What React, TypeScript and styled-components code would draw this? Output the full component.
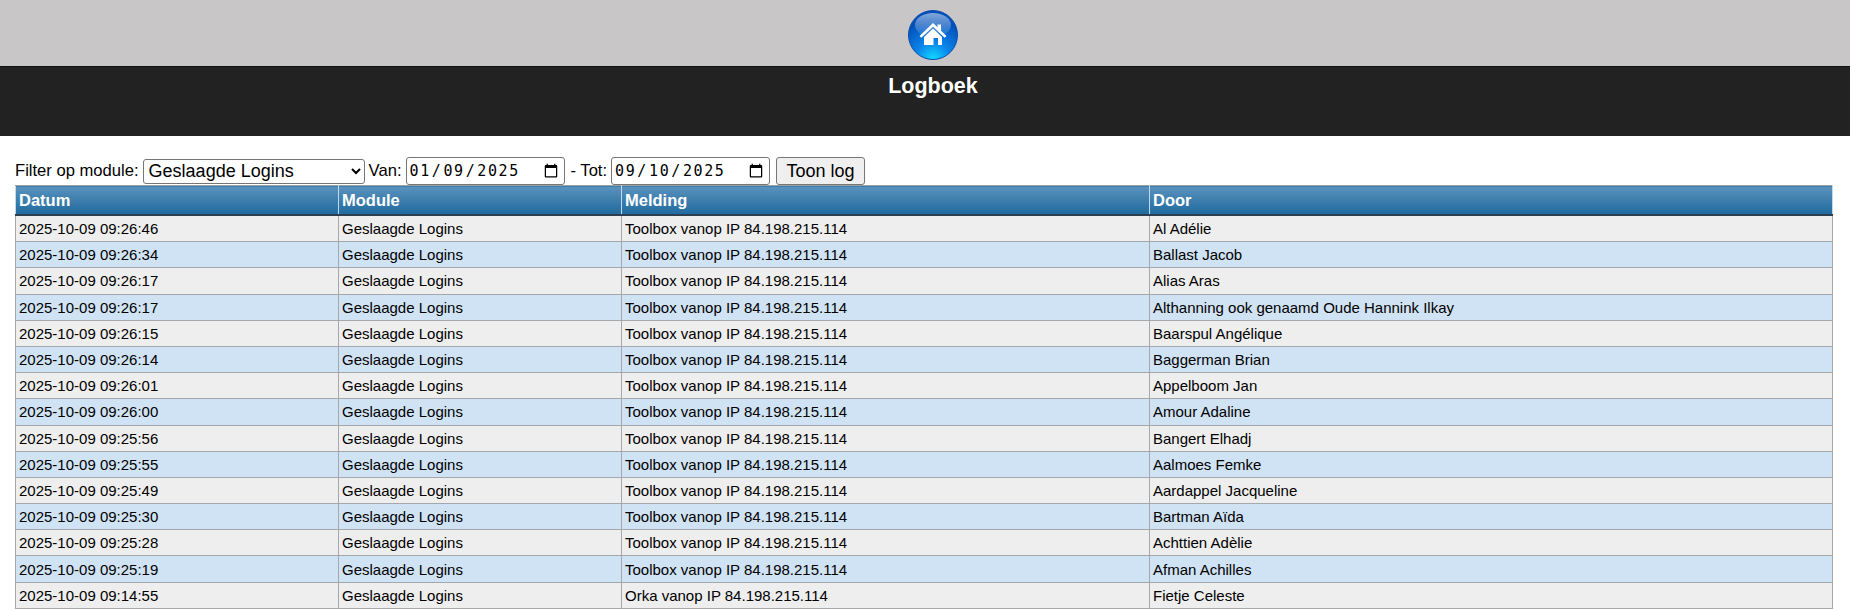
import React from 'react';
import styled, { createGlobalStyle } from 'styled-components';

const Global = createGlobalStyle`
  html, body {
    margin: 0;
    padding: 0;
    background: #fff;
    font-family: "Liberation Sans", Arial, sans-serif;
    overflow: hidden;
  }
`;

const TopBar = styled.div`
  height: 67px;
  background: #c8c6c7;
  display: flex;
  justify-content: center;
  align-items: flex-start;
  padding: 10px 0 0 16px;
  box-sizing: border-box;
  border-bottom: 1px solid #111;
`;

const HomeLink = styled.a`
  display: block;
  width: 50px;
  height: 50px;
`;

const TitleBar = styled.div`
  height: 69px;
  background: #222222;
  box-sizing: border-box;
  padding: 6px 0 0 16px;
`;

const Title = styled.h1`
  margin: 0;
  color: #fff;
  font-size: 21.5px;
  line-height: 26px;
  font-weight: bold;
  text-align: center;
`;

const Content = styled.div`
  padding: 21px 18px 0 15px;
`;

const FilterForm = styled.form`
  display: flex;
  align-items: center;
  gap: 4px;
  height: 28px;
  font-size: 16.6px;
  color: #000;
`;

const ModuleSelect = styled.select`
  width: 222px;
  height: 25px;
  font-family: "Liberation Sans", Arial, sans-serif;
  font-size: 18px;
  padding: 0 0 0 1px;
  border: 1px solid #767676;
  border-radius: 3px;
  background: #fff;
  color: #000;
`;

const DateInput = styled.input`
  width: 159px;
  height: 28px;
  margin-right: 2px;
  box-sizing: border-box;
  font-family: "DejaVu Sans Mono", "Liberation Mono", monospace;
  font-size: 15px;
  letter-spacing: 1.6px;
  padding: 1px 3px 1px 2px;
  border: 1px solid #767676;
  border-radius: 3px;
  background: #fff;
  color: #000;

  &::-webkit-calendar-picker-indicator {
    width: 16px;
    height: 16px;
    padding: 0;
    margin: 0 2px 0 0;
  }
`;

const SubmitButton = styled.button`
  height: 28px;
  width: 89px;
  font-family: "Liberation Sans", Arial, sans-serif;
  font-size: 18px;
  padding: 0;
  border: 1px solid #767676;
  border-radius: 3px;
  background: #efefef;
  color: #000;
`;

const LogTable = styled.table`
  width: 1817px;
  table-layout: fixed;
  border-collapse: collapse;
  font-size: 15px;
  color: #000;
`;

const HeadCell = styled.th`
  height: 28px;
  padding: 0 3px;
  text-align: left;
  color: #fff;
  font-size: 16.5px;
  font-weight: bold;
  background: linear-gradient(to bottom, #5a92bd, #1f6a9f);
  border: 1px solid #c4d8e8;
  border-bottom: 2px solid #2c3e50;
  border-top: 1px solid #a0a0a0;
`;

const Row = styled.tr<{ $odd: boolean }>`
  background: ${(p) => (p.$odd ? '#d0e3f5' : '#eeeeee')};
`;

const Cell = styled.td`
  height: 25.2px;
  padding: 0 3px;
  border: 1px solid #a4a8ad;
  white-space: nowrap;
`;

const columns = [323, 283, 528, 683];

const rows: [string, string, string][] = [
  ['2025-10-09 09:26:46', 'Toolbox vanop IP 84.198.215.114', 'Al Adélie'],
  ['2025-10-09 09:26:34', 'Toolbox vanop IP 84.198.215.114', 'Ballast Jacob'],
  ['2025-10-09 09:26:17', 'Toolbox vanop IP 84.198.215.114', 'Alias Aras'],
  ['2025-10-09 09:26:17', 'Toolbox vanop IP 84.198.215.114', 'Althanning ook genaamd Oude Hannink Ilkay'],
  ['2025-10-09 09:26:15', 'Toolbox vanop IP 84.198.215.114', 'Baarspul Angélique'],
  ['2025-10-09 09:26:14', 'Toolbox vanop IP 84.198.215.114', 'Baggerman Brian'],
  ['2025-10-09 09:26:01', 'Toolbox vanop IP 84.198.215.114', 'Appelboom Jan'],
  ['2025-10-09 09:26:00', 'Toolbox vanop IP 84.198.215.114', 'Amour Adaline'],
  ['2025-10-09 09:25:56', 'Toolbox vanop IP 84.198.215.114', 'Bangert Elhadj'],
  ['2025-10-09 09:25:55', 'Toolbox vanop IP 84.198.215.114', 'Aalmoes Femke'],
  ['2025-10-09 09:25:49', 'Toolbox vanop IP 84.198.215.114', 'Aardappel Jacqueline'],
  ['2025-10-09 09:25:30', 'Toolbox vanop IP 84.198.215.114', 'Bartman Aïda'],
  ['2025-10-09 09:25:28', 'Toolbox vanop IP 84.198.215.114', 'Achttien Adèlie'],
  ['2025-10-09 09:25:19', 'Toolbox vanop IP 84.198.215.114', 'Afman Achilles'],
  ['2025-10-09 09:14:55', 'Orka vanop IP 84.198.215.114', 'Fietje Celeste'],
];

const HomeIcon = () => (
  <svg width="50" height="50" viewBox="0 0 50 50">
    <defs>
      <radialGradient id="orb" cx="50%" cy="100%" r="80%">
        <stop offset="0%" stopColor="#12dcff" />
        <stop offset="45%" stopColor="#0a84ea" />
        <stop offset="100%" stopColor="#0350b8" />
      </radialGradient>
      <linearGradient id="shine" x1="0" y1="0" x2="0" y2="1">
        <stop offset="0%" stopColor="#ffffff" stopOpacity="0.5" />
        <stop offset="100%" stopColor="#ffffff" stopOpacity="0.05" />
      </linearGradient>
    </defs>
    <circle cx="25" cy="25" r="24.5" fill="url(#orb)" stroke="#0a4fb0" />
    <ellipse cx="25" cy="15" rx="18" ry="12" fill="url(#shine)" />
    <path
      fill="#fff"
      d="M11.500 26 25 13l4.500 4.300V14.500h3.500v6.200l5.500 5.300-1.800 1.800L25 16.800 13.300 27.800Z"
    />
    <path
      fill="#fff"
      fillRule="evenodd"
      d="M16 27 25 18.500l9 8.500v8H16ZM25.500 28v7H30v-7Z"
    />
  </svg>
);

export default function App() {
  return (
    <>
      <Global />
      <TopBar>
        <HomeLink href="#">
          <HomeIcon />
        </HomeLink>
      </TopBar>
      <TitleBar>
        <Title>Logboek</Title>
      </TitleBar>
      <Content>
        <FilterForm>
          <span>Filter op module:</span>
          <ModuleSelect defaultValue="logins">
            <option value="logins">Geslaagde Logins</option>
          </ModuleSelect>
          <span>Van:</span>
          <DateInput type="date" defaultValue="2025-01-09" />
          <span>- Tot:</span>
          <DateInput type="date" defaultValue="2025-09-10" />
          <SubmitButton type="button">Toon log</SubmitButton>
        </FilterForm>
        <LogTable>
          <colgroup>
            {columns.map((w) => (
              <col key={w} style={{ width: w }} />
            ))}
          </colgroup>
          <thead>
            <tr>
              <HeadCell>Datum</HeadCell>
              <HeadCell>Module</HeadCell>
              <HeadCell>Melding</HeadCell>
              <HeadCell>Door</HeadCell>
            </tr>
          </thead>
          <tbody>
            {rows.map(([date, message, user], i) => (
              <Row key={date + user} $odd={i % 2 === 1}>
                <Cell>{date}</Cell>
                <Cell>Geslaagde Logins</Cell>
                <Cell>{message}</Cell>
                <Cell>{user}</Cell>
              </Row>
            ))}
          </tbody>
        </LogTable>
      </Content>
    </>
  );
}
